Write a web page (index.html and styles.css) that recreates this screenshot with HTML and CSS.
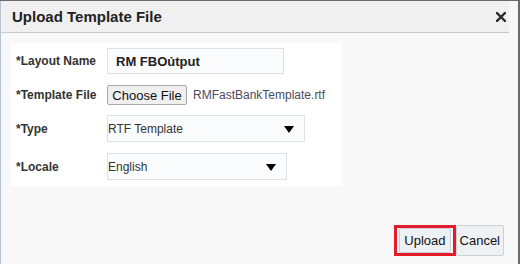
FILE: index.html
```html
<!DOCTYPE html>
<html lang="en">
<head>
    <meta charset="UTF-8">
    <title>Upload Template File</title>
    <link rel="stylesheet" href="styles.css">
</head>
<body>
    <div class="dialog">
        <div class="dialog-header">
            <span class="dialog-title">Upload Template File</span>
            <svg class="dialog-close" width="10" height="10" viewBox="0 0 10 10">
                <path d="M1 1 L9 9 M9 1 L1 9" stroke="#2b2b2b" stroke-width="2.4" stroke-linecap="square"/>
            </svg>
        </div>
        <div class="dialog-body">
            <div class="form-panel">
                <div class="form-row">
                    <label class="form-label">*Layout Name</label>
                    <div class="text-input">RM FBOủtput</div>
                </div>
                <div class="form-row row-file">
                    <label class="form-label">*Template File</label>
                    <span class="file-button">Choose File</span>
                    <span class="file-name">RMFastBankTemplate.rtf</span>
                </div>
                <div class="form-row row-select">
                    <label class="form-label">*Type</label>
                    <div class="select select-type">
                        <span>RTF Template</span>
                        <span class="select-arrow"></span>
                    </div>
                </div>
                <div class="form-row row-select">
                    <label class="form-label">*Locale</label>
                    <div class="select select-locale">
                        <span>English</span>
                        <span class="select-arrow"></span>
                    </div>
                </div>
            </div>
            <div class="dialog-footer">
                <div class="highlight">
                    <button class="btn" type="button">Upload</button>
                </div>
                <button class="btn btn-cancel" type="button">Cancel</button>
            </div>
        </div>
    </div>
</body>
</html>
```

FILE: styles.css
```css
body {
    margin: 0;
    padding: 0;
    font-family: "Liberation Sans", Arial, sans-serif;
    background-color: #6b6b6b;
}
.dialog {
    width: 517px;
    height: 263px;
    margin-top: 1px;
    background-color: #f8f8f8;
    border-left: 1px solid #b6c4d2;
    display: flex;
    flex-direction: column;
}
.dialog-header {
    height: 31px;
    margin-right: 9px;
    padding: 0 0 0 11px;
    background-color: #f0f0f0;
    display: flex;
    align-items: center;
    justify-content: space-between;
    border-bottom: 1px solid #c3ccd4;
    box-shadow: 9px 0 0 #f8f8f8;
}
.dialog-title {
    font-size: 15px;
    font-weight: bold;
    color: #222222;
}
.dialog-close {
    margin-right: 3px;
    margin-top: 1px;
}
.dialog-body {
    flex: 1;
    display: flex;
    flex-direction: column;
    padding: 10px 0 0 10px;
}
.form-panel {
    width: 331px;
    height: 143px;
    background-color: #ffffff;
    padding: 5px 0 0 5px;
    box-sizing: border-box;
}
.form-row {
    display: flex;
    align-items: center;
    height: 26px;
    margin-bottom: 11px;
}
.row-file {
    height: 20px;
    margin-bottom: 10px;
}
.row-select {
    height: 27px;
}
.form-label {
    width: 91px;
    font-size: 12px;
    font-weight: bold;
    color: #333333;
}
.text-input {
    width: 167px;
    height: 24px;
    padding-left: 8px;
    border: 1px solid #dde2e6;
    background-color: #fbfcfe;
    font-size: 13px;
    font-weight: bold;
    color: #222222;
    display: flex;
    align-items: center;
}
.file-button {
    height: 18px;
    width: 78px;
    border: 1px solid #a9a9a9;
    border-radius: 2px;
    background-color: #efefef;
    font-size: 13px;
    color: #111111;
    display: flex;
    align-items: center;
    justify-content: center;
}
.file-name {
    margin-left: 6px;
    font-size: 12px;
    color: #4a4a5a;
}
.select {
    height: 25px;
    border: 1px solid #dde2e6;
    background-color: #fbfcfe;
    font-size: 12px;
    color: #333333;
    display: flex;
    align-items: center;
    justify-content: space-between;
    padding: 0 10px 0 0;
}
.select-type {
    width: 186px;
}
.select-locale {
    width: 168px;
}
.select-arrow {
    width: 0;
    height: 0;
    margin-top: 2px;
    border-left: 5px solid transparent;
    border-right: 5px solid transparent;
    border-top: 7px solid #000000;
}
.dialog-footer {
    display: flex;
    justify-content: flex-end;
    align-items: center;
    margin-top: 39px;
    margin-right: 14px;
}
.highlight {
    border: 3px solid #e41b2a;
    padding: 0 2px;
    display: flex;
}
.btn {
    font-family: "Liberation Sans", Arial, sans-serif;
    font-size: 13px;
    color: #111111;
    background-color: #eef1f4;
    border: 1px solid #c9d1d8;
    border-radius: 2px;
    padding: 0 4px;
    height: 26px;
}
.highlight .btn {
    height: 25px;
    margin: 0;
}
.btn-cancel {
    height: 31px;
    padding: 0 3px;
}
```
